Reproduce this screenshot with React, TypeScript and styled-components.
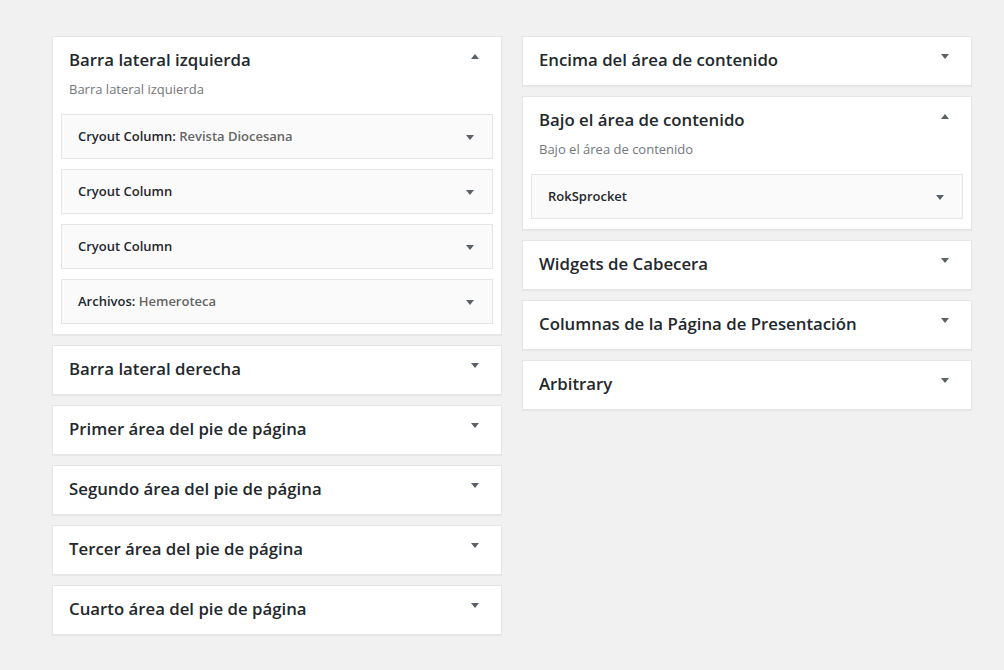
import React from "react";
import styled, { createGlobalStyle } from "styled-components";

const Global = createGlobalStyle`
  html, body { margin: 0; padding: 0; background: #f1f1f1; }
  body { font-family: "Open Sans", "Liberation Sans", sans-serif; color: #23282d; }
  * { box-sizing: border-box; }
`;

const Page = styled.div`
  display: grid;
  grid-template-columns: 450px 450px;
  column-gap: 20px;
  align-items: start;
  padding: 36px 0 0 52px;
  min-height: 670px;
`;

const Column = styled.div`
  display: flex;
  flex-direction: column;
  gap: 10px;
`;

const Sidebar = styled.div`
  background: #fff;
  border: 1px solid #e5e5e5;
  box-shadow: 0 1px 1px rgba(0, 0, 0, 0.04);
`;

const Header = styled.div`
  display: flex;
  align-items: flex-start;
  justify-content: space-between;
  padding: 13px 22px 15px 16px;
`;

const Name = styled.h2`
  margin: 0;
  font-size: 16.8px;
  line-height: 20px;
  font-weight: 600;
  color: #23282d;
`;

const Arrow = styled.span<{ $up?: boolean }>`
  display: block;
  width: 0;
  height: 0;
  margin-top: 4px;
  border-left: 4px solid transparent;
  border-right: 4px solid transparent;
  ${(p) =>
    p.$up
      ? "border-bottom: 5px solid #5b6168;"
      : "border-top: 5px solid #5b6168;"}
`;

const Description = styled.p`
  margin: -5px 0 16px;
  padding: 0 16px;
  font-size: 13px;
  line-height: 18px;
  color: #72777c;
`;

const WidgetList = styled.div`
  display: flex;
  flex-direction: column;
  gap: 10px;
  padding: 0 8px 10px;
`;

const Widget = styled.div`
  display: flex;
  align-items: center;
  justify-content: space-between;
  height: 45px;
  padding: 0 18px 1px 16px;
  background: #fafafa;
  border: 1px solid #e5e5e5;
`;

const WidgetTitle = styled.h3`
  margin: 0;
  font-size: 13px;
  font-weight: 600;
  color: #23282d;
`;

const InTitle = styled.span`
  font-weight: 600;
  color: #666;
`;

const WidgetArrow = styled(Arrow)`
  margin-top: 2px;
`;

type W = { name: string; sub?: string };
type S = { name: string; open?: boolean; widgets?: W[] };

const left: S[] = [
  {
    name: "Barra lateral izquierda",
    open: true,
    widgets: [
      { name: "Cryout Column", sub: "Revista Diocesana" },
      { name: "Cryout Column" },
      { name: "Cryout Column" },
      { name: "Archivos", sub: "Hemeroteca" },
    ],
  },
  { name: "Barra lateral derecha" },
  { name: "Primer área del pie de página" },
  { name: "Segundo área del pie de página" },
  { name: "Tercer área del pie de página" },
  { name: "Cuarto área del pie de página" },
];

const right: S[] = [
  { name: "Encima del área de contenido" },
  {
    name: "Bajo el área de contenido",
    open: true,
    widgets: [{ name: "RokSprocket" }],
  },
  { name: "Widgets de Cabecera" },
  { name: "Columnas de la Página de Presentación" },
  { name: "Arbitrary" },
];

function SidebarBox({ s }: { s: S }) {
  return (
    <Sidebar>
      <Header>
        <Name>{s.name}</Name>
        <Arrow $up={s.open} />
      </Header>
      {s.open && (
        <>
          <Description>{s.name}</Description>
          <WidgetList>
            {s.widgets?.map((w, i) => (
              <Widget key={i}>
                <WidgetTitle>
                  {w.name}
                  {w.sub && (
                    <>
                      : <InTitle>{w.sub}</InTitle>
                    </>
                  )}
                </WidgetTitle>
                <WidgetArrow />
              </Widget>
            ))}
          </WidgetList>
        </>
      )}
    </Sidebar>
  );
}

export default function App() {
  return (
    <>
      <Global />
      <Page>
        <Column>
          {left.map((s, i) => (
            <SidebarBox key={i} s={s} />
          ))}
        </Column>
        <Column>
          {right.map((s, i) => (
            <SidebarBox key={i} s={s} />
          ))}
        </Column>
      </Page>
    </>
  );
}
